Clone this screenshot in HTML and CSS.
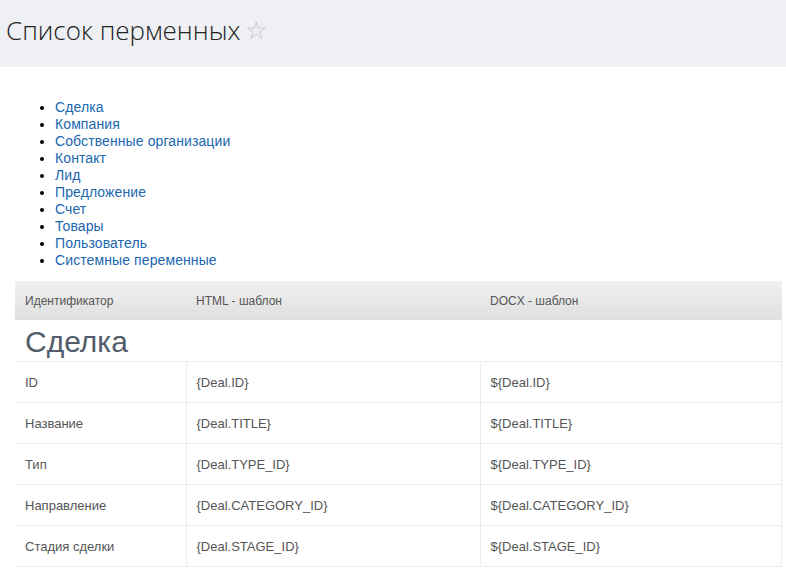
FILE: index.html
```html
<!DOCTYPE html>
<html lang="ru">
<head>
<meta charset="utf-8">
<link rel="stylesheet" href="styles.css">
</head>
<body>
<header class="page-head">
  <h1 class="page-title">Список перменных <span class="star">☆</span></h1>
</header>
<main class="content">
  <ul class="nav-list">
    <li><a href="#">Сделка</a></li>
    <li><a href="#">Компания</a></li>
    <li><a href="#">Собственные организации</a></li>
    <li><a href="#">Контакт</a></li>
    <li><a href="#">Лид</a></li>
    <li><a href="#">Предложение</a></li>
    <li><a href="#">Счет</a></li>
    <li><a href="#">Товары</a></li>
    <li><a href="#">Пользователь</a></li>
    <li><a href="#">Системные переменные</a></li>
  </ul>
  <table class="vars">
    <thead>
      <tr><th class="c1">Идентификатор</th><th class="c2">HTML - шаблон</th><th class="c3">DOCX - шаблон</th></tr>
    </thead>
    <tbody>
      <tr class="section"><td colspan="3">Сделка</td></tr>
      <tr><td>ID</td><td>{Deal.ID}</td><td>${Deal.ID}</td></tr>
      <tr><td>Название</td><td>{Deal.TITLE}</td><td>${Deal.TITLE}</td></tr>
      <tr><td>Тип</td><td>{Deal.TYPE_ID}</td><td>${Deal.TYPE_ID}</td></tr>
      <tr><td>Направление</td><td>{Deal.CATEGORY_ID}</td><td>${Deal.CATEGORY_ID}</td></tr>
      <tr><td>Стадия сделки</td><td>{Deal.STAGE_ID}</td><td>${Deal.STAGE_ID}</td></tr>
    </tbody>
  </table>
</main>
</body>
</html>
```
FILE: styles.css
```css
html, body { margin: 0; padding: 0; background: #fff; }
body { font-family: "Liberation Sans", Arial, sans-serif; }

.page-head {
  background: #eef0f3;
  height: 67px;
  box-sizing: border-box;
  padding: 14px 0 0 6px;
}
.page-title {
  margin: 0;
  font-family: "Open Sans", "Liberation Sans", sans-serif;
  font-weight: 300;
  font-size: 26px;
  line-height: 32px;
  color: #222;
}
.star {
  color: #c4c6c9;
  font-family: "DejaVu Sans", sans-serif;
  font-size: 25px;
  position: relative;
  top: -1px;
  margin-left: -2px;
}

.content { padding: 32px 4px 2px 15px; }

.nav-list {
  margin: 0 0 12px;
  padding: 0 0 0 40px;
  font-size: 14px;
  line-height: 17px;
  letter-spacing: 0.1px;
}
.nav-list a { color: #2067b0; text-decoration: none; }

.vars {
  width: 767px;
  border-collapse: collapse;
  font-size: 13px;
  color: #555;
}
.vars th {
  background: linear-gradient(#f0f0f0, #e0e0e0);
  font-weight: normal;
  font-size: 12px;
  text-align: left;
  height: 39px;
  padding: 0 10px;
  color: #555;
}
.vars th.c1 { width: 151px; }
.vars th.c2 { width: 274px; }
.vars td {
  height: 40px;
  padding: 0 10px;
  border-top: 1px solid #ececec;
  border-right: 1px solid #ececec;
  border-bottom: 1px solid #ececec;
}
.vars tbody tr:first-child td { border-top: none; }
.vars .section td {
  font-size: 30px;
  color: #535c69;
  height: 39px;
  padding-top: 2px;
}
```
